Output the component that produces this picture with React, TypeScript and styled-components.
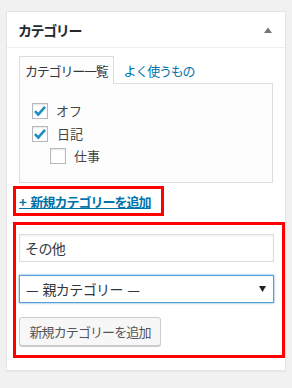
import React from "react";
import styled, { createGlobalStyle } from "styled-components";

const Global = createGlobalStyle`
  html, body { margin: 0; padding: 0; background: #f1f1f1; }
  body {
    font-family: "Noto Sans CJK JP", "Noto Sans", sans-serif;
    color: #444;
    -webkit-font-smoothing: none;
  }
  * { box-sizing: border-box; }
`;

const Page = styled.div`
  padding: 11px 0 18px 6px;
`;

const Panel = styled.div`
  width: 280px;
  background: #fff;
  border: 1px solid #e5e5e5;
  box-shadow: 0 1px 1px rgba(0, 0, 0, 0.04);
`;

const Header = styled.div`
  height: 36px;
  border-bottom: 1px solid #eee;
  display: flex;
  align-items: center;
  justify-content: space-between;
  padding: 0 13px 0 11px;
`;

const Title = styled.h2`
  margin: 0;
  font-size: 14px;
  font-weight: 700;
  letter-spacing: -1.4px;
  color: #23282d;
  line-height: 20px;
`;

const Body = styled.div`
  padding: 8px 12px 12px;
  display: flex;
  flex-direction: column;
`;

const Tabs = styled.ul`
  display: flex;
  margin: 0;
  padding: 0;
  list-style: none;
  position: relative;
  z-index: 1;
  margin-bottom: -1px;
`;

const Tab = styled.li<{ $active?: boolean }>`
  height: 28px;
  padding: 0 5px;
  font-size: 13px;
  letter-spacing: -1.2px;
  line-height: 28px;
  color: ${(p) => (p.$active ? "#32373c" : "#0073aa")};
  background: ${(p) => (p.$active ? "#fdfdfd" : "transparent")};
  border: 1px solid ${(p) => (p.$active ? "#ddd" : "transparent")};
  border-bottom: none;
  margin-right: ${(p) => (p.$active ? "4px" : "0")};
`;

const TabPanel = styled.div`
  border: 1px solid #ddd;
  background: #fdfdfd;
  height: 100px;
  padding: 16px 0 0 12px;
`;

const CatList = styled.ul`
  margin: 0;
  padding: 0;
  list-style: none;
`;

const CatItem = styled.li<{ $depth?: number }>`
  display: flex;
  align-items: center;
  height: 22.5px;
  padding-left: ${(p) => (p.$depth ?? 0) * 18}px;
  font-size: 13px;
  color: #444;
`;

const Box = styled.span`
  width: 16px;
  height: 16px;
  border: 1px solid #b4b9be;
  background: #fff;
  box-shadow: inset 0 1px 2px rgba(0, 0, 0, 0.1);
  display: flex;
  align-items: center;
  justify-content: center;
  margin-right: 8px;
  flex: none;
`;

const Label = styled.span<{ $gap?: number }>`
  margin-left: ${(p) => p.$gap ?? 0}px;
  line-height: 16px;
`;

const Mark = styled.div<{ $width: number }>`
  width: ${(p) => p.$width}px;
  border: 3px solid #ff0000;
  margin-left: -6px;
`;

const LinkMark = styled(Mark)`
  margin-top: 3px;
  height: 30px;
  padding: 0 0 0 3px;
  display: flex;
  align-items: center;
`;

const AddLink = styled.a`
  font-size: 13px;
  font-weight: 700;
  letter-spacing: -1px;
  word-spacing: 3px;
  color: #0073aa;
  text-decoration: underline;
  line-height: 18px;
  margin-top: 1px;
`;

const FormMark = styled(Mark)`
  margin-top: 6px;
  height: 136px;
  padding: 9px 0 0 3px;
  display: flex;
  flex-direction: column;
  align-items: flex-start;
`;

const TextInput = styled.input`
  width: 255px;
  height: 28px;
  border: 1px solid #ddd;
  box-shadow: inset 0 1px 2px rgba(0, 0, 0, 0.07);
  background: #fff;
  padding: 0 5px;
  font-family: inherit;
  font-size: 14px;
  letter-spacing: -0.6px;
  color: #32373c;
  outline: none;
`;

const SelectWrap = styled.div`
  position: relative;
  margin-top: 13px;
  width: 255px;
  height: 28px;
`;

const Select = styled.select`
  appearance: none;
  width: 100%;
  height: 100%;
  border: 1px solid #5b9dd9;
  box-shadow: 0 0 2px rgba(30, 140, 190, 0.8);
  background: #fff;
  padding: 0 0 0 6px;
  font-family: inherit;
  font-size: 14px;
  letter-spacing: -0.6px;
  word-spacing: 2px;
  color: #32373c;
  outline: none;
`;

const Arrow = styled.svg`
  position: absolute;
  right: 8px;
  top: 11px;
  pointer-events: none;
`;

const Button = styled.button`
  margin-top: 14px;
  width: 142px;
  height: 29px;
  border: 1px solid #ccc;
  border-radius: 3px;
  background: #f7f7f7;
  box-shadow: 0 1px 0 #ccc;
  color: #555;
  font-family: inherit;
  font-size: 13px;
  letter-spacing: -0.9px;
  padding: 0;
  text-align: center;
`;

const Check = () => (
  <svg width="14" height="14" viewBox="0 0 14 14">
    <path d="M2 7.2 L5.2 10.5 L12 2.8" fill="none" stroke="#1e8cbe" strokeWidth="2.6" />
  </svg>
);

const cats = [
  { name: "オフ", checked: true, depth: 0, gap: 0 },
  { name: "日記", checked: true, depth: 0, gap: 1 },
  { name: "仕事", checked: false, depth: 1, gap: 0 },
];

export default function App() {
  return (
    <>
      <Global />
      <Page>
        <Panel>
          <Header>
            <Title>カテゴリー</Title>
            <svg width="8" height="6" viewBox="0 0 8 6">
              <path d="M0 6 L4 0.5 L8 6 Z" fill="#72777c" />
            </svg>
          </Header>
          <Body>
            <Tabs>
              <Tab $active>カテゴリー一覧</Tab>
              <Tab>よく使うもの</Tab>
            </Tabs>
            <TabPanel>
              <CatList>
                {cats.map((c) => (
                  <CatItem key={c.name} $depth={c.depth}>
                    <Box>{c.checked && <Check />}</Box>
                    <Label $gap={c.gap}>{c.name}</Label>
                  </CatItem>
                ))}
              </CatList>
            </TabPanel>
            <LinkMark $width={151}>
              <AddLink href="#">+ 新規カテゴリーを追加</AddLink>
            </LinkMark>
            <FormMark $width={272}>
              <TextInput defaultValue="その他" />
              <SelectWrap>
                <Select defaultValue="-1">
                  <option value="-1">— 親カテゴリー —</option>
                </Select>
                <Arrow width="7" height="6" viewBox="0 0 7 6">
                  <path d="M0 0 L7 0 L3.5 6 Z" fill="#222" />
                </Arrow>
              </SelectWrap>
              <Button>新規カテゴリーを追加</Button>
            </FormMark>
          </Body>
        </Panel>
      </Page>
    </>
  );
}
